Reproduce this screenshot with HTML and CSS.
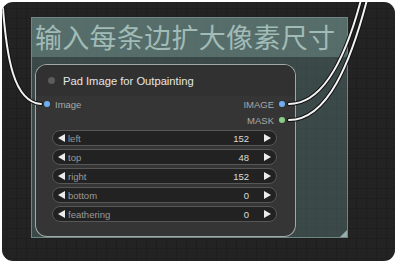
FILE: index.html
```html
<!DOCTYPE html>
<html lang="en">
<head>
  <meta charset="UTF-8" />
  <title>Pad Image for Outpainting</title>
  <link rel="stylesheet" href="styles.css">
</head>
<body>

  <div class="canvas">
    <div class="group">
      <div class="group-title">输入每条边扩大像素尺寸</div>
      <div class="group-body">
        <div class="node">
          <div class="node-title"><span class="title-dot"></span>Pad Image for Outpainting</div>

          <div class="slot-row">
            <div class="slot-in"><span class="dot blue"></span>Image</div>
            <div class="slot-out">IMAGE<span class="dot blue"></span></div>
          </div>
          <div class="slot-row">
            <div class="slot-in"></div>
            <div class="slot-out">MASK<span class="dot green"></span></div>
          </div>

          <div class="widgets">
            <div class="widget"><span class="arrow-left"></span><span class="w-label">left</span><span class="w-value">152</span><span class="arrow-right"></span></div>
            <div class="widget"><span class="arrow-left"></span><span class="w-label">top</span><span class="w-value">48</span><span class="arrow-right"></span></div>
            <div class="widget"><span class="arrow-left"></span><span class="w-label">right</span><span class="w-value">152</span><span class="arrow-right"></span></div>
            <div class="widget"><span class="arrow-left"></span><span class="w-label">bottom</span><span class="w-value">0</span><span class="arrow-right"></span></div>
            <div class="widget"><span class="arrow-left"></span><span class="w-label">feathering</span><span class="w-value">0</span><span class="arrow-right"></span></div>
          </div>
        </div>
      </div>
      <span class="resize-handle"></span>
    </div>

    <!-- links between nodes, drawn over the canvas -->
    <svg class="links" width="396" height="264" viewBox="0 0 396 264">
      <g fill="none" stroke-linecap="round">
        <path d="M2 -6 C6 60, 14 102, 41 104" stroke="#111" stroke-width="4"/>
        <path d="M2 -6 C6 60, 14 102, 41 104" stroke="#f2f2f2" stroke-width="2"/>
        <path d="M289 104 C322 104, 345 62, 362 -4" stroke="#111" stroke-width="4"/>
        <path d="M289 104 C322 104, 345 62, 362 -4" stroke="#f2f2f2" stroke-width="2"/>
        <path d="M289 120 C328 120, 351 62, 368 -4" stroke="#111" stroke-width="4"/>
        <path d="M289 120 C328 120, 351 62, 368 -4" stroke="#f2f2f2" stroke-width="2"/>
      </g>
    </svg>
  </div>

</body>
</html>
```

FILE: styles.css
```css
body {
  margin: 0;
  background: #fff;
  font-family: 'Liberation Sans', Arial, sans-serif;
}

.canvas {
  position: relative;
  margin: 2px 1px 0 2px;
  width: 393px;
  height: 259px;
  border-radius: 11px;
  overflow: hidden;
  box-sizing: border-box;
  padding: 15px 0 0 29px;
  background-color: #232323;
  background-image:
    linear-gradient(#1e1e1e 1px, transparent 1px),
    linear-gradient(90deg, #1e1e1e 1px, transparent 1px);
  background-size: 10px 10px;
  background-position: 4px 6px;
}

.group {
  position: relative;
  width: 317px;
  height: 221px;
  box-sizing: border-box;
  border: 1px solid #6f8784;
  background: rgba(92, 128, 124, 0.42);
}

.group-title {
  height: 39px;
  box-sizing: border-box;
  padding: 2px 0 0 3px;
  background: rgba(120, 152, 148, 0.45);
  color: #a1bbb7;
  font-family: 'Noto Sans CJK SC', sans-serif;
  font-size: 27px;
  line-height: 34px;
  letter-spacing: 0.3px;
  white-space: nowrap;
  overflow: hidden;
}

.group-body {
  padding: 8px 0 0 4px;
}

.node {
  width: 259px;
  height: 171px;
  box-sizing: border-box;
  background: #353535;
  border-radius: 11px;
  box-shadow: 0 0 0 1px #a2a8a6;
}

.node-title {
  display: flex;
  align-items: center;
  gap: 8px;
  height: 31px;
  padding-left: 12px;
  border-radius: 11px 11px 0 0;
  background: #313131;
  color: #e6e6e6;
  font-size: 11.2px;
}

.title-dot {
  width: 7px;
  height: 7px;
  border-radius: 50%;
  background: #5c5c5c;
}

.slot-row {
  display: flex;
  justify-content: space-between;
  align-items: center;
  height: 16px;
  padding: 0 10px 0 8px;
  font-size: 9.5px;
  color: #a8a8a8;
}

.slot-in,
.slot-out {
  display: flex;
  align-items: center;
  gap: 5px;
}

.dot {
  width: 6px;
  height: 6px;
  border-radius: 50%;
}

.dot.blue {
  background: #6eaef0;
}

.dot.green {
  background: #86cf86;
}

.widgets {
  display: flex;
  flex-direction: column;
  gap: 3px;
  margin: 2px 18px 0 16px;
}

.widget {
  display: flex;
  align-items: center;
  height: 16px;
  box-sizing: border-box;
  padding: 0 5px;
  border: 1px solid #575757;
  border-radius: 8px;
  background: #222;
  font-size: 9.5px;
}

.arrow-left {
  width: 0;
  height: 0;
  border-top: 4.5px solid transparent;
  border-bottom: 4.5px solid transparent;
  border-right: 7px solid #ececec;
}

.arrow-right {
  width: 0;
  height: 0;
  border-top: 4.5px solid transparent;
  border-bottom: 4.5px solid transparent;
  border-left: 7px solid #ececec;
  margin-left: 15px;
}

.w-label {
  margin-left: 3px;
  color: #9a9a9a;
  flex: 1;
}

.w-value {
  color: #dcdcdc;
}

.resize-handle {
  position: absolute;
  right: 0;
  bottom: 0;
  width: 0;
  height: 0;
  border-left: 7px solid transparent;
  border-bottom: 7px solid #93aeab;
}

.links {
  position: absolute;
  top: -2px;
  left: -2px;
  pointer-events: none;
}
```
